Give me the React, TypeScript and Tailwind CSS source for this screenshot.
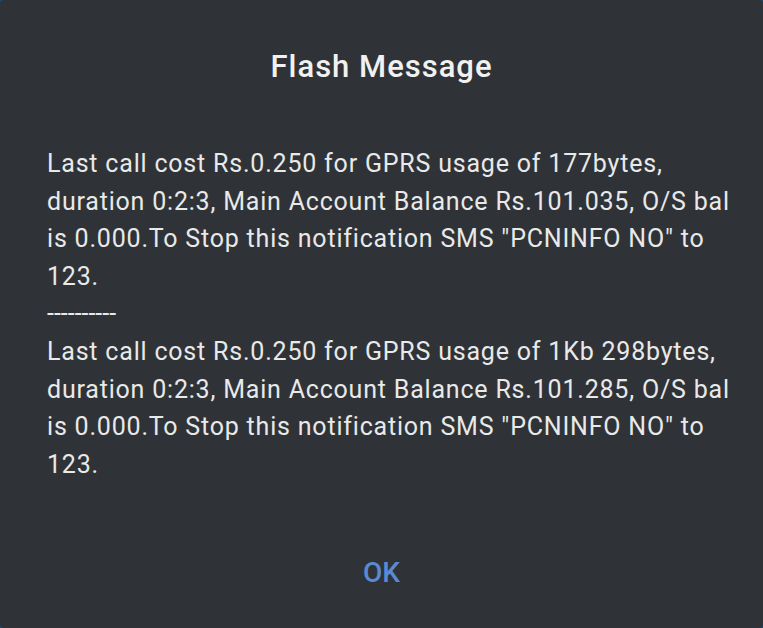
export default function App() {
  const blocks = [
    [
      "Last call cost Rs.0.250 for GPRS usage of 177bytes,",
      "duration 0:2:3, Main Account Balance Rs.101.035, O/S bal",
      'is 0.000.To Stop this notification SMS "PCNINFO NO" to',
      "123.",
    ],
    [
      "Last call cost Rs.0.250 for GPRS usage of 1Kb 298bytes,",
      "duration 0:2:3, Main Account Balance Rs.101.285, O/S bal",
      'is 0.000.To Stop this notification SMS "PCNINFO NO" to',
      "123.",
    ],
  ];

  return (
    <div className="w-[763px] h-[628px] overflow-hidden bg-[#1d4a73]">
      <div
        className="w-full h-full flex flex-col bg-[#2f3337] rounded-[4px]"
        style={{ fontFamily: "Roboto, 'Noto Sans', sans-serif" }}
      >
        <h1 className="pt-[49px] text-center text-[31px] leading-[36px] tracking-[1px] font-medium text-[#f1f1f1]">
          Flash Message
        </h1>

        <div className="mt-[60px] px-[47px] text-[25px] leading-[37.6px] tracking-[0.8px] text-[#e9e9e9] whitespace-nowrap">
          {blocks[0].map((line, i) => (
            <div key={"a" + i}>{line}</div>
          ))}
          <div className="tracking-[0px]">----------</div>
          {blocks[1].map((line, i) => (
            <div key={"b" + i}>{line}</div>
          ))}
        </div>

        <div className="mt-[74px] flex justify-center">
          <button className="text-[28px] leading-[32px] font-medium text-[#5b8ad4]">
            OK
          </button>
        </div>
      </div>
    </div>
  );
}
